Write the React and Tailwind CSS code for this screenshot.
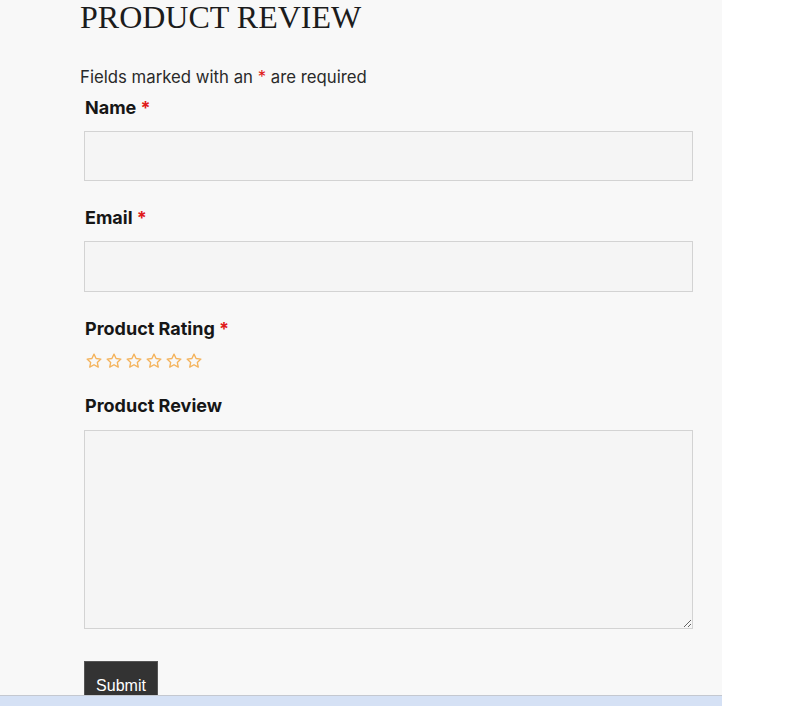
import React from 'react';

const Star = () => (
  <svg width="18" height="18" viewBox="0 0 24 24" fill="none" stroke="#f4b35c" strokeWidth="1.8" strokeLinejoin="round">
    <path d="M12 2.8l2.75 5.9 6.45.75-4.8 4.4 1.3 6.35L12 17l-5.7 3.2 1.3-6.35-4.8-4.4 6.45-.75z" />
  </svg>
);

const Req = () => <span className="text-[#e01b1b]">*</span>;

export default function App() {
  return (
    <div className="w-[800px] h-[706px] bg-white flex flex-col overflow-hidden">
      <div className="flex-1 w-[722px] bg-[#f8f8f8] overflow-hidden">
        <div className="pl-[80px] pr-[29px] pt-[1px]">
          <h1 className="text-[32px] leading-[32px] text-[#1c1c1c]"
              style={{ fontFamily: '"Liberation Serif", serif' }}>
            PRODUCT REVIEW
          </h1>

          <div className="font-['Inter',sans-serif]">
            <p className="mt-[32px] text-[16.75px] leading-[24px] text-[#2a2a2a]">
              Fields marked with an <Req /> are required
            </p>

            <form className="pl-[4px]" onSubmit={(e) => e.preventDefault()}>
              <label className="block mt-[5px] text-[18px] leading-[27px] font-bold text-[#161616]">
                <span className="pl-[1px]">Name</span> <Req />
              </label>
              <input className="block mt-[10px] w-[609px] h-[50px] bg-[#f5f5f5] border border-[#d3d3d3] outline-none" />

              <label className="block mt-[23px] text-[18px] leading-[27px] font-bold text-[#161616]">
                <span className="pl-[1px]">Email</span> <Req />
              </label>
              <input className="block mt-[10px] w-[609px] h-[51px] bg-[#f5f5f5] border border-[#d3d3d3] outline-none" />

              <label className="block mt-[23px] text-[18px] leading-[27px] font-bold text-[#161616]">
                <span className="pl-[1px]">Product Rating</span> <Req />
              </label>
              <div className="mt-[10px] flex gap-[2px] pl-[1px]">
                {[0, 1, 2, 3, 4, 5].map((i) => <Star key={i} />)}
              </div>

              <label className="block mt-[22px] text-[18px] leading-[27px] font-bold text-[#161616]">
                <span className="pl-[1px]">Product Review</span>
              </label>
              <textarea className="block mt-[11px] w-[609px] h-[199px] bg-[#f5f5f5] border border-[#d3d3d3] outline-none resize" />

              <button className="block mt-[32px] w-[74px] h-[44px] bg-[#333333] text-white text-[16px] pt-[6px] leading-[20px] border border-[#555]"
                      style={{ fontFamily: '"Liberation Sans", Arial, sans-serif' }}>
                Submit
              </button>
            </form>
          </div>
        </div>
      </div>
      <div className="h-[11px] w-[722px] border-t border-[#c4c8d0] bg-[#d5e1f5]" />
    </div>
  );
}
